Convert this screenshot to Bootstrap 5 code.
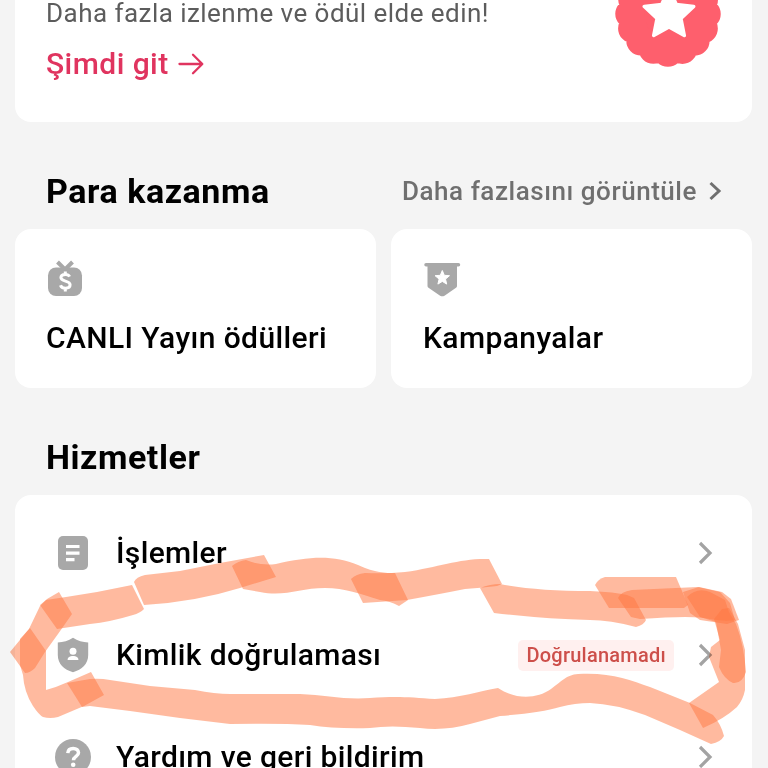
<!DOCTYPE html>
<html lang="tr">
<head>
<meta charset="utf-8">
<meta name="viewport" content="width=device-width, initial-scale=1">
<title>Para kazanma</title>
<link href="https://cdn.jsdelivr.net/npm/bootstrap@5.3.0/dist/css/bootstrap.min.css" rel="stylesheet">
<style>
body{background:#f4f4f4;color:#000;font-family:Roboto,"Noto Sans",sans-serif;font-size:30px;line-height:40px;height:768px}
.screen{width:768px;height:768px;padding:0 16px 0 15px}
.panel{background:#fff;border-radius:16px}
.promo{height:183px;margin-top:-61px;padding:22px 31px 0}
.promo-text{font-size:26px;line-height:26px;color:#5c5c5c;padding-top:39px;letter-spacing:.46px}
.promo-link{color:#e0345f;margin-top:18px;gap:9px}
.promo-link span{letter-spacing:.45px}
.section-head{height:107px;padding:0 30px 0 31px}
.section-head h2{font-size:34px;line-height:40px;font-weight:700;letter-spacing:.55px}
.head-offset{margin-top:30px}
.more{font-size:26px;font-weight:500;color:#6f6f6f;gap:12px;letter-spacing:.54px}
.tiles{gap:15px}
.tile{height:159px;padding:29px 31px 0}
.tile+.tile{padding-left:32px}
.tile-label{margin-top:18px;letter-spacing:.4px}
.services{padding-top:7px}
.entry{height:102px;padding:0 39px 0 38px}
.entry-icon{width:40px;margin-right:23px}
.entry-name{letter-spacing:.36px}
.status{background:#fff0ef;color:#cd4f4a;font-size:20px;line-height:31px;border-radius:5px;padding:0 8px;margin-right:24px;letter-spacing:.24px}
.label{font-weight:500;white-space:nowrap}
svg{display:block;flex:none}
.marker{left:0;top:0;pointer-events:none;mix-blend-mode:multiply}
</style>
</head>
<body class="overflow-hidden">
<main class="screen position-relative overflow-hidden">
  <section class="panel promo d-flex justify-content-between">
    <div>
      <div class="promo-text label fw-normal"><span>Daha fazla izlenme ve ödül elde edin!</span></div>
      <a class="promo-link label d-flex align-items-center text-decoration-none" href="#"><span>Şimdi git</span>
        <svg width="26" height="22" viewBox="0 0 26 22" fill="none" stroke="#e0345f" stroke-width="2.3" stroke-linecap="round" stroke-linejoin="round"><path d="M1.500 11H24M15 1.800 24.300 11 15 20.200"/></svg></a>
    </div>
    <svg width="106" height="106" viewBox="-53 -53 106 106"><circle r="46" fill="#fe5f6d"/><circle r="38" fill="none" stroke="#fe5f6d" stroke-width="29.500" stroke-linecap="round" stroke-dasharray="0 14.9226"/><path transform="translate(1 .5)" d="M0-26 7.300-10.100 24.700-8 11.900 3.900 15.300 21 0 12.500-15.300 21-11.900 3.900-24.700-8-7.300-10.100Z" fill="#fff" stroke="#fff" stroke-width="3.500" stroke-linejoin="round"/></svg>
  </section>

  <div class="section-head d-flex justify-content-between align-items-center">
    <h2 class="m-0"><span class="d-block head-offset">Para kazanma</span></h2>
    <a class="more head-offset d-flex align-items-center text-decoration-none" href="#"><span>Daha fazlasını görüntüle</span>
      <svg width="13" height="20" viewBox="0 0 13 20" fill="none" stroke="#6f6f6f" stroke-width="3"><path d="m1.500 2 8.500 8-8.500 8"/></svg></a>
  </div>

  <div class="tiles d-flex">
    <section class="panel tile flex-fill w-50">
      <svg width="40" height="42" viewBox="0 0 40 42"><path d="m11.500 4 7.500 7.500L26.500 4" fill="none" stroke="#a8a8a8" stroke-width="4"/><rect x="2" y="9.500" width="34" height="28.500" rx="8" fill="#a8a8a8"/><path d="M23.600 18.700c-.7-1.500-2.200-2.300-4.300-2.300-2.700 0-4.400 1.200-4.400 3.200 0 4.600 9.200 2.400 9.200 7.200 0 2.100-1.900 3.400-4.700 3.400-2.500 0-4.300-1-4.900-3M19.300 13.500v3M19.300 30v3.500" fill="none" stroke="#fff" stroke-width="3"/></svg>
      <div class="tile-label label"><span>CANLI Yayın ödülleri</span></div>
    </section>
    <section class="panel tile flex-fill w-50">
      <svg width="40" height="42" viewBox="0 0 40 42"><path d="M3 5H35.500a1.500 1.500 0 0 1 0 3.500H34V28q0 1-1 1.700L21.500 37.700q-2.200 1.300-4.400 0L5.500 29.700q-1-.7-1-1.700V8.500H3A1.500 1.500 0 0 1 3 5Z" fill="#a8a8a8"/><path d="m19.300 12.500 2 4.800 5.200.4-4 3.400 1.200 5-4.400-2.700-4.400 2.700 1.200-5-4-3.400 5.200-.4Z" fill="#fff" stroke="#fff" stroke-linejoin="round"/></svg>
      <div class="tile-label label"><span>Kampanyalar</span></div>
    </section>
  </div>

  <div class="section-head d-flex align-items-center">
    <h2 class="m-0"><span class="d-block head-offset">Hizmetler</span></h2>
  </div>

  <section class="panel services">
    <div class="entry d-flex align-items-center">
      <div class="entry-icon"><svg width="40" height="40" viewBox="0 0 40 40"><rect x="5" y="3" width="30" height="34" rx="5" fill="#a8a8a8"/><path d="M13 13.500H26.500M13 20.200H26.500M13 26.700H21.500" stroke="#fff" stroke-width="3.200"/></svg></div>
      <div class="entry-name label flex-grow-1"><span>İşlemler</span></div>
      <svg width="15" height="24" viewBox="0 0 15 24" fill="none" stroke="#a3a3a3" stroke-width="3.200"><path d="m2 2 10 10L2 22"/></svg>
    </div>
    <div class="entry d-flex align-items-center">
      <div class="entry-icon"><svg width="40" height="40" viewBox="0 0 40 40"><path d="M20 2.800Q27 7.200 35.200 7.500V20C35.200 29 29 34.500 20 37.200 11 34.500 4.800 29 4.800 20V7.500Q13 7.200 20 2.800Z" fill="#a8a8a8"/><circle cx="20" cy="16.300" r="3.500" fill="#fff"/><path d="M14.600 25C14.600 22 17 21 20 21s5.400 1 5.400 4Z" fill="#fff"/></svg></div>
      <div class="entry-name label flex-grow-1"><span>Kimlik doğrulaması</span></div>
      <div class="status label"><span>Doğrulanamadı</span></div>
      <svg width="15" height="24" viewBox="0 0 15 24" fill="none" stroke="#a3a3a3" stroke-width="3.200"><path d="m2 2 10 10L2 22"/></svg>
    </div>
    <div class="entry d-flex align-items-center">
      <div class="entry-icon"><svg width="40" height="40" viewBox="0 0 40 40"><circle cx="20" cy="20" r="18" fill="#a8a8a8"/><path d="M14.800 16.200C15 13 17.200 11.400 20.200 11.400c3.200 0 5.300 1.700 5.300 4.400 0 3.600-5 3.600-5 7.400" fill="none" stroke="#fff" stroke-width="3.500"/><circle cx="20.200" cy="27.800" r="2.300" fill="#fff"/></svg></div>
      <div class="entry-name label flex-grow-1"><span>Yardım ve geri bildirim</span></div>
      <svg width="15" height="24" viewBox="0 0 15 24" fill="none" stroke="#a3a3a3" stroke-width="3.200"><path d="m2 2 10 10L2 22"/></svg>
    </div>
  </section>

  <!-- highlighter strokes around the verification row -->
  <svg class="marker position-absolute" width="768" height="768" viewBox="0 0 768 768">
    <g fill="#ff7843" fill-opacity=".51">
      <path d="M40 605 46 600 66 597 Q100 592 132 585L144 609Q140 613 133 615 110 622 90 624L57 629Z"/>
      <path d="M59 592 72 614 58 634 45 652 35 668Q30 673 25 673L10 652 29 629 40 606 47 599Z"/>
      <path d="M30 628 46 651V690Q57 687 68 682L91 672 104 695 84 706 58 717Q50 719 43 717 39 715 33 706 24 692 23 675L20 665V639Z"/>
      <path d="M67 683 90 679Q100 678 110 680L150 686 195 690Q215 694 230 694H300C325 695 345 700 370 698 395 696 410 697 435 699 460 698 480 691 498 688 516 700 537 699 551 689 562 681 566 675 578 674 610 672 630 680 650 687L690 703 713 715Q721 724 724 736 721 742 711 744L680 730 645 715Q615 704 590 703 575 703 560 707 540 713 500 716L470 724Q445 731 420 728 390 725 370 728 335 729 310 725 280 723 230 724L180 718 130 711 90 706 82 707Z"/>
      <path d="M134 582Q136 577 145 575L180 571 220 563 264 555 276 577 240 588Q195 602 144 605Z"/>
      <path d="M232 566Q238 561 246 560 260 566 276 564C310 556 334 555 358 565 376 573 385 573 395 573L408 600 399 606Q390 601 380 600C360 594 345 588 325 588 300 588 285 597 260 592L243 589Z"/>
      <path d="M351 579Q356 574 365 573 385 574 405 572C440 567 460 558 489 559L502 584 497 586Q480 588 465 589 440 594 407 600L363 603Z"/>
      <path d="M480 588Q490 584 500 584 535 591 590 591 615 592 627 595L634 598 646 620Q644 625 636 627 610 620 590 620 545 619 494 613Z"/>
      <path d="M595 585Q598 579 605 577L676 577 688 605 684 608H609Z"/>
      <path d="M618 598Q620 592 632 590L698 587 720 592 730 603 735 620Q725 622 710 619 695 615 640 619L631 617Z"/>
      <path d="M683 592 699 587 722 592 731 599 739 620 727 624 700 620 690 613Z"/>
      <path d="M687 597Q697 587 710 592L725 600 729 612 736 624Q744 645 746 672 742 684 733 683 724 679 719 667L721 650 716 622 700 617Z"/>
      <path d="M711 647 720 640 714 619 722 609 729 608 738 624 745 650V690Q743 700 737 707 724 719 703 728L689 703 719 682 709 657Z"/>
    </g>
  </svg>
</main>
<script src="https://cdn.jsdelivr.net/npm/bootstrap@5.3.0/dist/js/bootstrap.bundle.min.js"></script>
</body>
</html>
